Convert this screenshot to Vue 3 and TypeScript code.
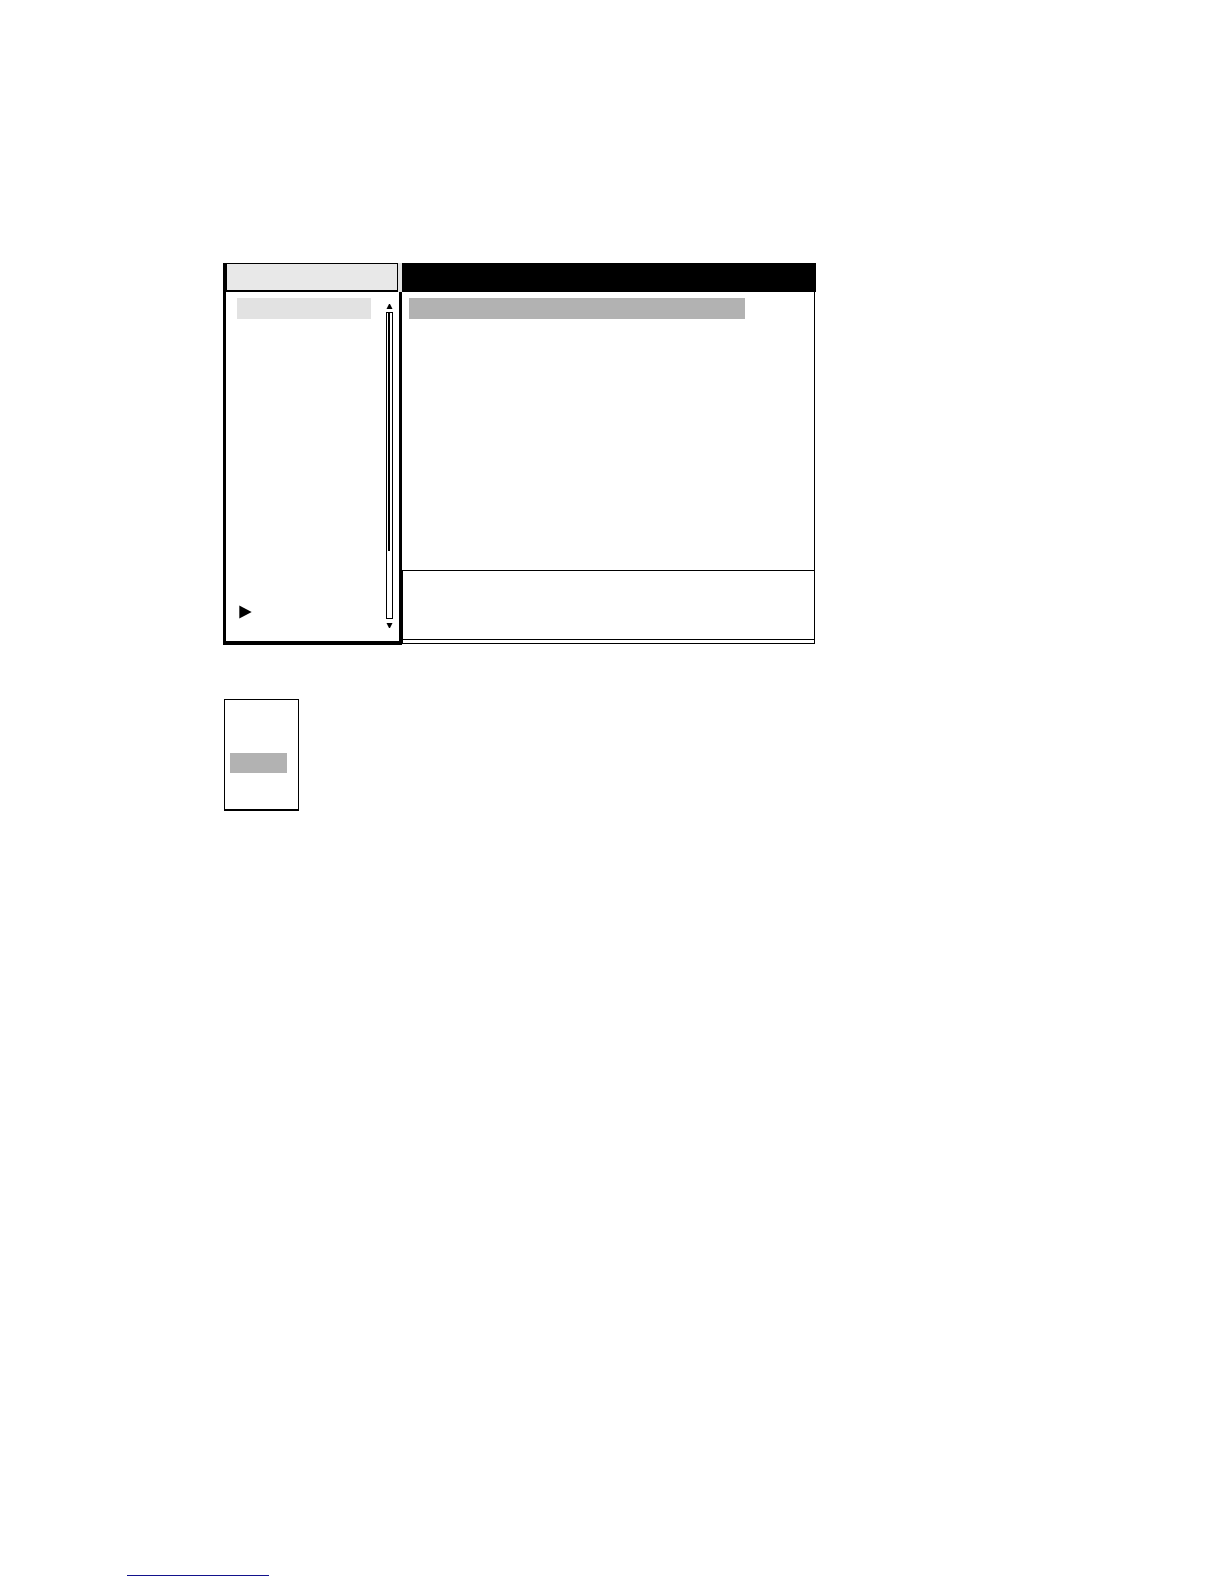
<script setup lang="ts">
import { ref } from 'vue'

const scrolled = ref(238)
const trackLength = 307
</script>

<template>
  <main class="page">
    <section class="window">
      <aside class="sidebar">
        <header class="sidebar-head">
          <div class="sidebar-title"></div>
        </header>
        <div class="sidebar-body">
          <div class="items">
            <div class="item-selected"></div>
            <svg class="marker" width="13" height="14" viewBox="0 0 13 14" aria-hidden="true">
              <path d="M0.3 0.5 L12.7 7 L0.3 13.5 Z" />
            </svg>
          </div>
          <div class="scroll">
            <svg width="7" height="5" viewBox="0 0 7 5" aria-hidden="true">
              <path d="M3 0 L4 0 L6.5 5 L0.5 5 Z" />
            </svg>
            <div class="track" :style="{ height: trackLength + 'px' }">
              <div class="thumb" :style="{ height: scrolled + 'px' }"></div>
            </div>
            <svg width="7" height="5" viewBox="0 0 7 5" aria-hidden="true">
              <path d="M0.5 0 L6.5 0 L4 5 L3 5 Z" />
            </svg>
          </div>
        </div>
      </aside>

      <section class="content">
        <header class="content-head"></header>
        <div class="content-body">
          <div class="row-selected"></div>
        </div>
        <footer class="status">
          <div class="status-text"></div>
        </footer>
      </section>
    </section>

    <section class="popup">
      <div class="option-selected"></div>
    </section>

    <a class="link" href="#"></a>
  </main>
</template>

<style>
body {
  margin: 0;
  background: #fff;
}
</style>

<style scoped>
.page,
.page * {
  box-sizing: border-box;
}
.page {
  display: flex;
  flex-direction: column;
  min-height: 100vh;
  padding: 263px 408px 8px 127px;
  font-family: "Liberation Sans", Arial, sans-serif;
}
.window {
  display: flex;
  height: 382px;
  margin-left: 96px;
}
.sidebar {
  display: flex;
  flex-direction: column;
  flex: 0 0 179px;
}
.sidebar-head {
  height: 29px;
  padding-right: 4px;
  background: #e2e2e2;
}
.sidebar-title {
  height: 100%;
  border: solid #000;
  border-width: 1px 1px 2px 4px;
  background: #e8e8e8;
}
.sidebar-body {
  display: flex;
  justify-content: space-between;
  flex: 1;
  padding: 6px 6px 13px 11px;
  border: solid #000;
  border-width: 0 3px 4px;
}
.items {
  display: flex;
  flex-direction: column;
  justify-content: space-between;
  padding-bottom: 9px;
}
.item-selected {
  width: 134px;
  height: 21px;
  background: #e2e2e2;
}
.marker {
  display: block;
  margin-left: 2px;
}
.scroll {
  display: flex;
  flex-direction: column;
  padding-top: 6px;
}
.scroll svg {
  display: block;
}
.track {
  display: flex;
  justify-content: center;
  width: 7px;
  margin: 3px 0 4px;
  border: 1px solid #000;
}
.thumb {
  width: 2px;
  margin-right: 1px;
  background: #000;
}
.content {
  display: flex;
  flex-direction: column;
  flex: 1;
  padding-bottom: 1px;
}
.content-head {
  height: 29px;
  background: #000;
}
.content-body {
  flex: 1;
  margin-right: 1px;
  padding: 6px 69px 0 7px;
  border-right: 1px solid #000;
}
.row-selected {
  height: 21px;
  background: #b2b2b2;
}
.status {
  height: 74px;
  margin-right: 1px;
  border: 1px solid #000;
}
.status-text {
  height: 69px;
  border-bottom: 1px solid #000;
}
.popup {
  width: 75px;
  height: 112px;
  margin: 54px 0 0 97px;
  padding: 53px 11px 0 5px;
  border: 1px solid #000;
  border-bottom-width: 2px;
}
.option-selected {
  height: 20px;
  background: #b2b2b2;
}
.link {
  width: 142px;
  height: 16px;
  margin-top: auto;
  border-bottom: 1px solid #12128c;
}
</style>
